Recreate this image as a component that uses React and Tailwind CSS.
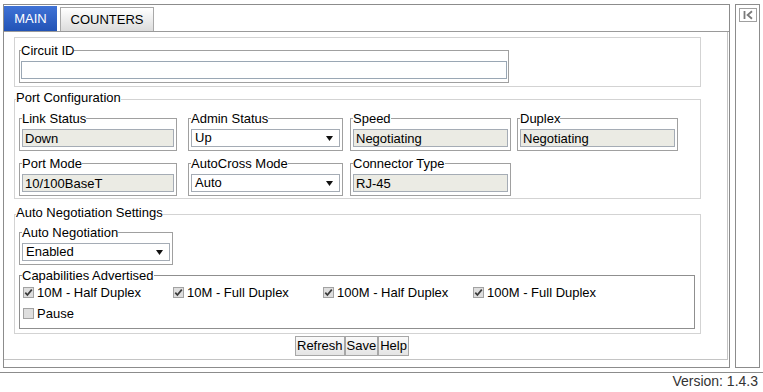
import React from "react";

const Arrow = () => (
  <svg width="7" height="5" viewBox="0 0 7 5">
    <polygon points="0,0 7,0 3.5,5" fill="#111" />
  </svg>
);

const Box = ({ label, className = "", children }) => (
  <fieldset className={`border border-[#a0a0a0] px-[2px] pb-[3px] ${className}`}>
    <legend className="leading-[13px]">{label}</legend>
    <div className="mt-[4px]">{children}</div>
  </fieldset>
);

const ReadOnly = ({ value = "" }) => (
  <input
    readOnly
    value={value}
    className="block h-[18px] w-full border border-[#a5acb5] bg-[#ebebe4] px-[2px] text-[13px] leading-[16px] text-black outline-none"
  />
);

const Select = ({ value }) => (
  <div className="flex h-[18px] w-full items-center border border-[#a5acb5] bg-white pl-[3px] pr-[6px] leading-[16px]">
    <span className="flex-1">{value}</span>
    <Arrow />
  </div>
);

const Check = ({ checked, label }) => (
  <label className="flex h-[21px] w-[150px] items-center">
    <span className="ml-[1px] mr-[3px] flex h-[11px] w-[11px] items-center justify-center border border-[#a2a2a2] bg-[#dedede]">
      {checked && (
        <svg width="9" height="9" viewBox="0 0 9 9">
          <path d="M1.3 4.6 L3.4 7 L7.8 1.6" fill="none" stroke="#3a3a3a" strokeWidth="1.7" />
        </svg>
      )}
    </span>
    <span>{label}</span>
  </label>
);

const Section = ({ label, className = "", children }) => (
  <fieldset className={`w-[687px] border border-[#d3d3d3] px-[4px] ${className}`}>
    <legend className="ml-[-3px] pb-[3px] leading-[13px]">{label}</legend>
    {children}
  </fieldset>
);

const Button = ({ children }) => (
  <button className="h-[20px] border border-[#a7a7a7] bg-linear-to-b from-[#fafafa] to-[#e4e4e4] px-[1px] leading-[16px] text-black">
    {children}
  </button>
);

export default function App() {
  return (
    <div className="h-[392px] w-[763px] overflow-hidden bg-white font-['Liberation_Sans',Arial,sans-serif] text-[13px] text-black">
      <div className="flex pl-[3px] pt-[4px]">
        <div className="flex h-[364px] w-[727px] flex-col border border-[#8c8c8c]">
          <div className="flex h-[27px] items-end border-b border-[#9a9a9a]">
            <div className="flex h-[25px] w-[53px] items-center justify-center bg-linear-to-b from-[#3f72d6] to-[#2253b6] text-white">
              MAIN
            </div>
            <div className="ml-[3px] flex h-[24px] w-[94px] items-center justify-center border border-b-0 border-[#a8a8a8] bg-linear-to-b from-white to-[#dcdcdc]">
              COUNTERS
            </div>
          </div>

          <div className="mr-[1px] h-[328px] border-b border-r border-[#c4c4c4] pl-[10px] pt-[5px]">
            <fieldset className="w-[687px] border border-[#d3d3d3] pb-[3px] pl-[4px] pt-[6px]">
              <fieldset className="w-[490px] border border-[#a0a0a0] px-[1px] pb-[3px]">
                <legend className="leading-[13px]">Circuit ID</legend>
                <input
                  value=""
                  readOnly
                  className="mt-[4px] block h-[18px] w-full border border-[#9aa7b4] bg-white outline-none"
                />
              </fieldset>
            </fieldset>

            <Section label="Port Configuration" className="mt-[4px] pb-[2px] pt-[5px]">
              <div className="flex">
                <Box label="Link Status" className="w-[158px]">
                  <ReadOnly value="Down" />
                </Box>
                <Box label="Admin Status" className="ml-[11px] w-[155px]">
                  <Select value="Up" />
                </Box>
                <Box label="Speed" className="ml-[7px] w-[161px]">
                  <ReadOnly value="Negotiating" />
                </Box>
                <Box label="Duplex" className="ml-[6px] w-[161px]">
                  <ReadOnly value="Negotiating" />
                </Box>
              </div>
              <div className="mt-[6px] flex">
                <Box label="Port Mode" className="w-[158px]">
                  <ReadOnly value="10/100BaseT" />
                </Box>
                <Box label="AutoCross Mode" className="ml-[11px] w-[155px]">
                  <Select value="Auto" />
                </Box>
                <Box label="Connector Type" className="ml-[7px] w-[161px]">
                  <ReadOnly value="RJ-45" />
                </Box>
              </div>
            </Section>

            <Section label="Auto Negotiation Settings" className="mt-[7px] pb-[4px] pt-[4px]">
              <Box label="Auto Negotiation" className="w-[154px]">
                <Select value="Enabled" />
              </Box>
              <fieldset className="mt-[4px] w-[676px] border border-[#8f8f8f] px-[2px] pb-[4px]">
                <legend className="leading-[13px]">Capabilities Advertised</legend>
                <div className="flex">
                  <Check checked label="10M - Half Duplex" />
                  <Check checked label="10M - Full Duplex" />
                  <Check checked label="100M - Half Duplex" />
                  <Check checked label="100M - Full Duplex" />
                </div>
                <div className="flex">
                  <Check label="Pause" />
                </div>
              </fieldset>
            </Section>

            <div className="ml-[281px] mt-[2px] flex">
              <Button>Refresh</Button>
              <Button>Save</Button>
              <Button>Help</Button>
            </div>
          </div>
        </div>

        <div className="ml-[5px] h-[364px] w-[25px] border border-[#8c8c8c]">
          <div className="ml-[3px] mt-[3px] flex h-[14px] w-[18px] items-center justify-center border border-[#a0a0a0] bg-white">
            <svg width="12" height="10" viewBox="0 0 12 10">
              <path d="M2.5 1 V9" stroke="#7a7a7a" strokeWidth="1.8" />
              <path d="M10 1.2 L5.6 5 L10 8.8" fill="none" stroke="#7a7a7a" strokeWidth="1.8" />
            </svg>
          </div>
        </div>
      </div>

      <div className="mt-[4px] border-t border-[#8c8c8c] pr-[5px] text-right text-[14px] leading-[16px] text-[#333]">
        Version: 1.4.3
      </div>
    </div>
  );
}
